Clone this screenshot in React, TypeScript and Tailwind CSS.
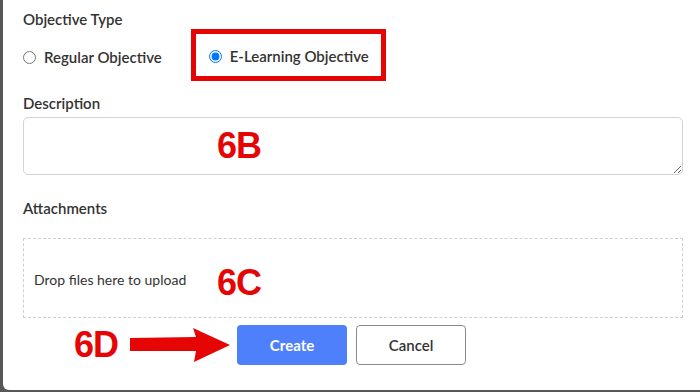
import React from "react";

const font = { fontFamily: "Lato, 'Noto Sans', sans-serif" };
const anno = { fontFamily: "'Liberation Sans', Arial, sans-serif" };

export default function App() {
  return (
    <div className="w-[700px] h-[392px] bg-[#575757] overflow-hidden flex flex-col" style={font}>
      <div className="h-[390px] ml-[3px] bg-white rounded-bl-[6px] pl-[20px] pr-[17px] pt-[9px] flex flex-col text-[#333]">
        <div className="text-[15px] leading-5 font-semibold text-[#333]">Objective Type</div>
        <div className="flex items-center h-[52px]">
          <label className="flex items-center gap-[8px] pt-[4px]">
            <input type="radio" name="t" className="m-0 w-[13px] h-[13px]" />
            <span className="text-[15px] font-semibold text-[#333]">Regular Objective</span>
          </label>
          <div className="ml-[29px] h-[52px] w-[195px] border-[5px] border-[#e60505] flex items-center pl-[13px] pt-[2px]">
            <label className="flex items-center gap-[8px]">
              <input type="radio" name="t" defaultChecked className="m-0 w-[13px] h-[13px]" />
              <span className="text-[15px] font-semibold text-[#333]">E-Learning Objective</span>
            </label>
          </div>
        </div>
        <div className="mt-[12px] text-[15px] leading-5 font-semibold text-[#333]">Description</div>
        <div className="relative mt-[4px]">
          <textarea className="block w-full h-[58px] border border-[#d4d4d4] rounded-[5px] outline-none" />
          <span className="absolute left-[194px] top-[9px] text-[36px] leading-10 font-bold text-[#e60505] tracking-[-1px]" style={anno}>6B</span>
        </div>
        <div className="mt-[23px] text-[15px] leading-5 font-semibold text-[#333]">Attachments</div>
        <div className="relative mt-[20px] h-[80px] border border-dashed border-[#cfcfcf] flex items-center pl-[10px]">
          <span className="text-[14px] text-[#333] pt-[2px]">Drop files here to upload</span>
          <span className="absolute left-[193px] top-[24px] text-[36px] leading-10 font-bold text-[#e60505] tracking-[-1px]" style={anno}>6C</span>
        </div>
        <div className="mt-[7px] flex items-center">
          <span className="ml-[51px] text-[36px] leading-10 font-bold text-[#e60505] tracking-[-1px]" style={anno}>6D</span>
          <svg className="ml-[12px]" width="100" height="38" viewBox="0 0 100 38">
            <polygon points="0,12 66,11 63,2 100,19 64,36 66,25 0,25" fill="#e60505" />
          </svg>
          <button className="ml-[7px] w-[110px] h-[40px] rounded-[4px] bg-[#4f80fb] text-white text-[15px] font-bold">Create</button>
          <button className="ml-[9px] w-[110px] h-[40px] rounded-[4px] bg-white border border-[#8a8a8a] text-[#333] text-[15px] font-semibold">Cancel</button>
        </div>
      </div>
    </div>
  );
}
